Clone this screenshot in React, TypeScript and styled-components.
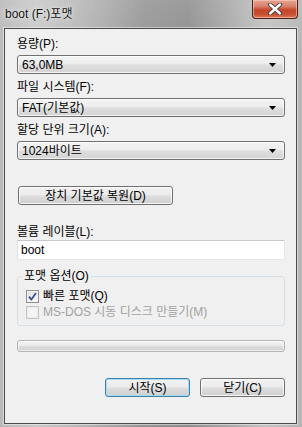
import React from 'react';
import styled, { createGlobalStyle } from 'styled-components';

const GlobalStyle = createGlobalStyle`
  html, body {
    margin: 0;
    padding: 0;
    background: #a9a9a9;
  }
  * {
    box-sizing: border-box;
  }
`;

const FONT = `"Liberation Sans", "Noto Sans CJK KR", sans-serif`;

const Window = styled.div`
  width: 302px;
  height: 427px;
  display: flex;
  flex-direction: column;
  padding: 0 5px 3px 4px;
  font-family: ${FONT};
  font-size: 12px;
  color: #000;
  background:
    linear-gradient(180deg, rgba(255, 255, 255, 0.12) 0px, rgba(255, 255, 255, 0) 60px),
    linear-gradient(
      90deg,
      #b9b9b9 0%,
      #c9c9c9 12%,
      #b2b2b2 30%,
      #959595 48%,
      #8e8e8e 62%,
      #a9a9a9 76%,
      #c3c3c3 88%,
      #b5b5b5 100%
    );
`;

const TitleBar = styled.div`
  height: 28px;
  display: flex;
  align-items: flex-start;
  justify-content: space-between;
  flex-shrink: 0;
`;

const Title = styled.div`
  margin-top: 7px;
  margin-left: 1px;
  line-height: 14px;
  font-size: 12px;
  color: #111;
  text-shadow: 0 0 6px rgba(255, 255, 255, 0.9), 0 0 2px rgba(255, 255, 255, 0.8);
`;

const CloseButton = styled.div`
  width: 46px;
  height: 19px;
  margin-right: -1px;
  display: flex;
  align-items: center;
  justify-content: center;
  border: 1px solid #4d2119;
  border-top: none;
  border-radius: 0 0 4px 4px;
  background: linear-gradient(180deg, #e8a493 0%, #d9826b 35%, #c5462b 55%, #c94f2f 80%, #dc7a5c 100%);
  box-shadow: inset 0 0 0 1px rgba(255, 210, 200, 0.55);
`;

const Client = styled.div`
  flex: 1;
  display: flex;
  flex-direction: column;
  padding: 7px 11px 0 12px;
  background: #f0f0f0;
  border: 1px solid #4b4b4b;
  box-shadow: 0 0 0 1px rgba(255, 255, 255, 0.45);
`;

const Label = styled.div<{ $top?: number }>`
  height: 16px;
  line-height: 16px;
  margin-top: ${(p) => p.$top ?? 0}px;
  margin-bottom: ${(p) => (p.$top !== undefined ? 0 : 3)}px;
  white-space: nowrap;
`;

const Combo = styled.div`
  height: 19px;
  margin-bottom: 5px;
  display: flex;
  align-items: center;
  justify-content: space-between;
  padding: 0 8px 0 4px;
  border: 1px solid #707070;
  border-radius: 3px;
  background: linear-gradient(180deg, #f4f4f4 0%, #ececec 48%, #dedede 52%, #d4d4d4 100%);
  box-shadow: inset 0 0 0 1px rgba(255, 255, 255, 0.7);
  line-height: 16px;
`;

const Arrow = () => (
  <svg width="7" height="4" viewBox="0 0 7 4">
    <polygon points="0,0 7,0 3.5,4" fill="#000" />
  </svg>
);

const PushButton = styled.div<{ $width: number; $default?: boolean }>`
  width: ${(p) => p.$width}px;
  height: 19px;
  display: flex;
  align-items: center;
  justify-content: center;
  line-height: 16px;
  border: 1px solid ${(p) => (p.$default ? '#3c7fb1' : '#707070')};
  border-radius: 3px;
  background: linear-gradient(180deg, #f2f2f2 0%, #ebebeb 48%, #dddddd 52%, #cfcfcf 100%);
  box-shadow: inset 0 0 0 1px ${(p) => (p.$default ? '#a9dcf6' : 'rgba(255, 255, 255, 0.8)')};
`;

const ResetButton = styled(PushButton)`
  margin-top: 21px;
  margin-left: 1px;
`;

const TextBox = styled.div`
  height: 20px;
  padding: 0 3px;
  line-height: 18px;
  background: #fff;
  border: 1px solid;
  border-color: #c5c7cd #e3e9ef #e3e9ef #e2e3ea;
`;

const Group = styled.fieldset`
  margin: 9px 0 0 0;
  padding: 5px 8px 5px 8px;
  border: 1px solid #d5dfe5;
  border-radius: 3px;
  min-width: 0;
`;

const Legend = styled.legend`
  padding: 0 2px;
  margin-left: -4px;
  line-height: 14px;
`;

const CheckRow = styled.div<{ $disabled?: boolean }>`
  height: 16px;
  display: flex;
  align-items: center;
  gap: 4px;
  line-height: 16px;
  white-space: nowrap;
  color: ${(p) => (p.$disabled ? '#a2a2a2' : '#000')};
`;

const Box = styled.span<{ $disabled?: boolean }>`
  width: 13px;
  height: 13px;
  flex-shrink: 0;
  display: flex;
  align-items: center;
  justify-content: center;
  border: 1px solid ${(p) => (p.$disabled ? '#c4c4c4' : '#8e8f8f')};
  background: ${(p) =>
    p.$disabled
      ? '#f4f4f4'
      : 'linear-gradient(135deg, #dcdcdc 0%, #f4f4f4 60%, #ffffff 100%)'};
  box-shadow: inset 0 0 0 1px ${(p) => (p.$disabled ? '#ececec' : '#f4f4f4')};
`;

const Check = () => (
  <svg width="9" height="9" viewBox="0 0 9 9">
    <path d="M1 4.6 L3.4 7.6 L8 1" stroke="#3b4f8e" strokeWidth="1.8" fill="none" strokeLinejoin="round" />
  </svg>
);

const Progress = styled.div`
  height: 12px;
  margin-top: 14px;
  border: 1px solid #b4b4b4;
  border-radius: 3px;
  background: linear-gradient(180deg, #f6f6f6 0%, #e9e9e9 45%, #dcdcdc 55%, #d2d2d2 100%);
  box-shadow: inset 0 0 0 1px rgba(255, 255, 255, 0.6);
`;

const ButtonRow = styled.div`
  margin-top: 26px;
  display: flex;
  justify-content: flex-end;
  gap: 10px;
`;

const fields = [
  { label: '용량(P):', value: '63,0MB' },
  { label: '파일 시스템(F):', value: 'FAT(기본값)' },
  { label: '할당 단위 크기(A):', value: '1024바이트' },
];

export default function App(): React.ReactElement {
  return (
    <>
      <GlobalStyle />
      <Window>
        <TitleBar>
          <Title>boot (F:)포맷</Title>
          <CloseButton>
            <svg width="16" height="12" viewBox="0 0 16 12">
              <path
                d="M3 1.5 L13 10.5 M13 1.5 L3 10.5"
                stroke="#3a3a3a"
                strokeWidth="4.2"
                strokeLinecap="round"
              />
              <path
                d="M3 1.5 L13 10.5 M13 1.5 L3 10.5"
                stroke="#ffffff"
                strokeWidth="2.4"
                strokeLinecap="round"
              />
            </svg>
          </CloseButton>
        </TitleBar>
        <Client>
          {fields.map((f) => (
            <React.Fragment key={f.label}>
              <Label>{f.label}</Label>
              <Combo>
                <span>{f.value}</span>
                <Arrow />
              </Combo>
            </React.Fragment>
          ))}
          <ResetButton $width={155}>장치 기본값 복원(D)</ResetButton>
          <Label $top={19}>볼륨 레이블(L):</Label>
          <TextBox>boot</TextBox>
          <Group>
            <Legend>포맷 옵션(O)</Legend>
            <CheckRow>
              <Box>
                <Check />
              </Box>
              빠른 포맷(Q)
            </CheckRow>
            <CheckRow $disabled>
              <Box $disabled />
              MS-DOS 시동 디스크 만들기(M)
            </CheckRow>
          </Group>
          <Progress />
          <ButtonRow>
            <PushButton $width={85} $default>
              시작(S)
            </PushButton>
            <PushButton $width={85}>닫기(C)</PushButton>
          </ButtonRow>
        </Client>
      </Window>
    </>
  );
}
